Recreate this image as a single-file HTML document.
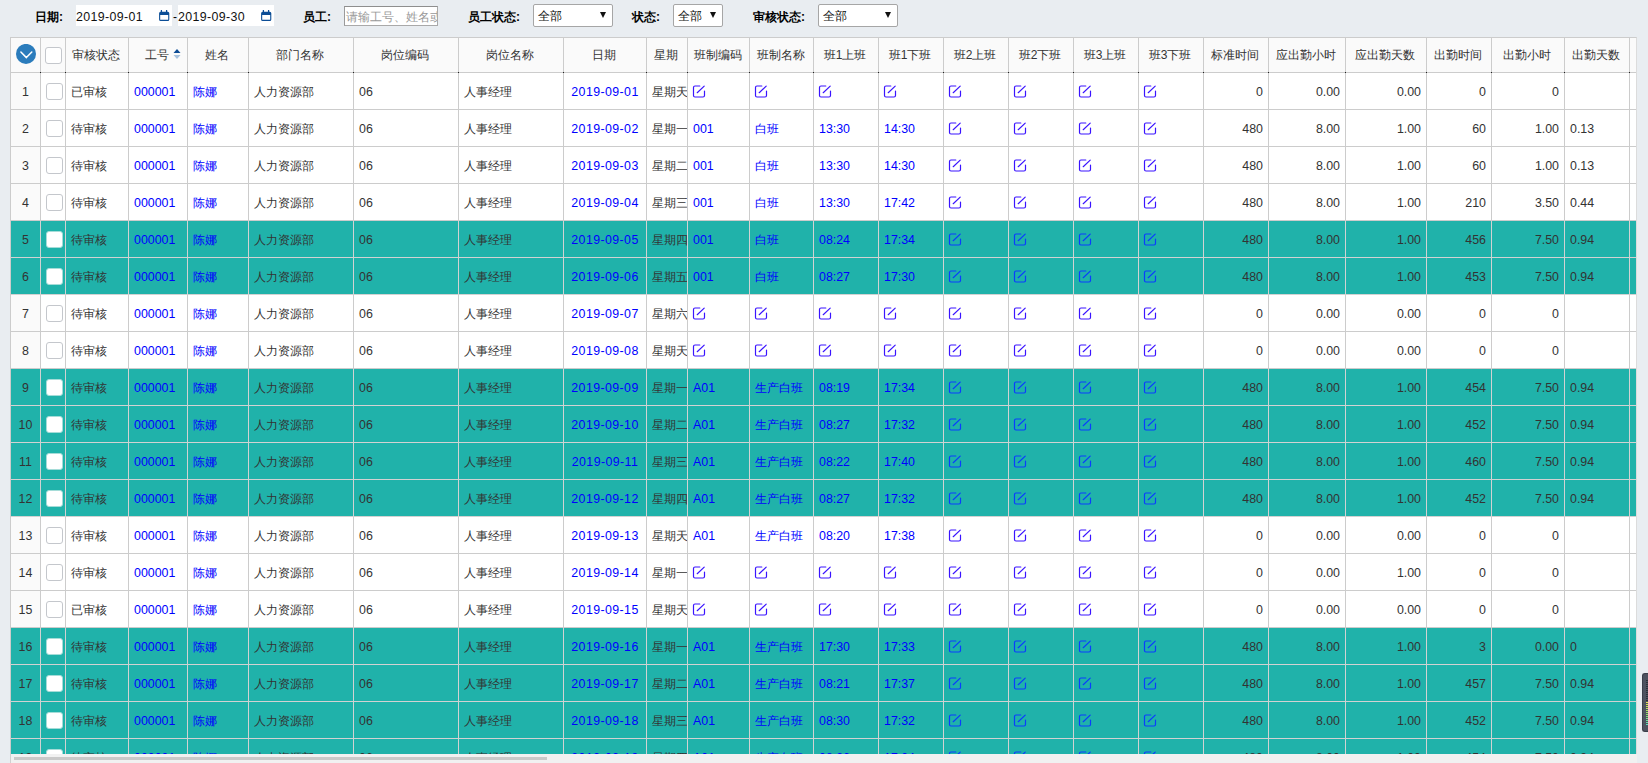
<!DOCTYPE html><html><head><meta charset="utf-8"><title>考勤</title><style>
*{box-sizing:border-box}
html,body{margin:0;padding:0}
body{width:1648px;height:763px;overflow:hidden;background:#e9edf1;font-family:"Liberation Sans",sans-serif;font-size:12px;color:#333;position:relative}
.lb{position:absolute;top:9px;height:16px;line-height:16px;font-weight:bold;color:#000;font-size:12px;white-space:nowrap}
.dt{position:absolute;top:5px;height:21px;width:96px;background:#fff;line-height:24px;padding-left:0;font-size:12.4px;letter-spacing:.35px;color:#111;white-space:nowrap}
.cal{position:absolute;top:5px;left:83px}
.inp{position:absolute;left:344px;top:6px;width:94px;height:20px;background:#fff;border:1px solid #a9a9a9;border-top-color:#8e8e8e;border-left-color:#9a9a9a;line-height:20px;padding-left:1px;color:#999;overflow:hidden;white-space:nowrap;font-size:12px}
.sel{position:absolute;top:4px;height:23px;background:#fff;border:1px solid #a6a6a6;border-radius:2px;line-height:22px;padding-left:4px;color:#111;white-space:nowrap}
.sel i{position:absolute;top:7px;width:0;height:0;border-left:3.5px solid transparent;border-right:3.5px solid transparent;border-top:6px solid #111}
#g{position:absolute;left:10px;top:37px;width:1627px;height:717px;overflow:hidden;border-left:1px solid #ccc;border-top:1px solid #ccc;border-right:1px solid #dcdcdc;background:#fff}
.r{display:flex;height:37px;width:1700px}
.r.h{height:35px}
.c{flex:none;height:100%;border-right:1px solid #ccc;border-bottom:1px solid #ccc;overflow:hidden;white-space:nowrap;line-height:38px;padding:0 5px;background:#fff;position:relative}
.h .c{background:#fafafa;line-height:34px;text-align:center;padding:0 2px 0 0}
.c.n{background:#fafafa;text-align:center;padding:0}
.t .c{background:#20b2aa;border-color:#d2d2d2}
.c.x{padding:0}
.b{color:#00f}
.ce{text-align:center;padding:0}
.ri{text-align:right}
.dd{letter-spacing:.4px}
.num{font-size:12.4px}
.cb{position:absolute;left:5px;top:10px;width:17px;height:17px;border:1px solid #c4c7cc;border-radius:3px;background:#fff}
.h .cb{left:4px;top:9px}
.t .cb{border-color:#a5dcd8}
.ed{position:absolute;left:4px;top:12px;fill:none;stroke:#3a14ff;stroke-width:1.2;stroke-linecap:round}
.t .ed{stroke:#0a3cff}
.chev{position:absolute;left:5px;top:6px}
.dot{position:absolute;width:1px;height:1px;background:#222;top:34px}
#sb{position:absolute;left:10px;top:754px;width:1627px;height:9px;background:#f1f1f1;border-left:1px solid #d0d0d0}
#sb div{position:absolute;left:3px;top:3px;width:533px;height:3px;background:#c9c9c9}
#wd{position:absolute;left:1642px;top:673px;width:8px;height:59px;background:#4d525f;border:1px solid #3b3f4a;border-right:0;border-radius:3px 0 0 3px;overflow:hidden}
#wd .a{position:absolute;left:3px;top:6px;width:4px;height:21px;background:repeating-linear-gradient(#2d3038 0 1px,#4d525f 1px 2px)}
#wd .bb{position:absolute;left:3px;top:28px;width:4px;height:24px;background:repeating-linear-gradient(transparent 0 1px,#4d525f 1px 2px),linear-gradient(#e8e44c,#86e06c 55%,#4fe0c8)}
</style></head><body>
<div class="lb" style="left:35px">日期:</div>
<div class="dt" style="left:76px">2019-09-01<svg class="cal" width="11" height="12" viewBox="0 0 11 12"><g transform="translate(0,0.3)"><path d="M2.4 0.2V2.6M7.6 0.2V2.6" stroke="#0b4d96" stroke-width="1.3" stroke-linecap="round" fill="none"/><path fill-rule="evenodd" fill="#0b4d96" d="M1.6 1.4H8.8Q10.3 1.4 10.3 2.9V9.2Q10.3 10.7 8.8 10.7H1.6Q0.1 10.7 0.1 9.2V2.9Q0.1 1.4 1.6 1.4ZM1.2 4.8V9.1Q1.2 9.5 1.6 9.5H8.8Q9.2 9.5 9.2 9.1V4.8Z"/></g></svg></div>
<div class="lb" style="left:173px;font-weight:normal;color:#000">-</div>
<div class="dt" style="left:178px">2019-09-30<svg class="cal" width="11" height="12" viewBox="0 0 11 12"><g transform="translate(0,0.3)"><path d="M2.4 0.2V2.6M7.6 0.2V2.6" stroke="#0b4d96" stroke-width="1.3" stroke-linecap="round" fill="none"/><path fill-rule="evenodd" fill="#0b4d96" d="M1.6 1.4H8.8Q10.3 1.4 10.3 2.9V9.2Q10.3 10.7 8.8 10.7H1.6Q0.1 10.7 0.1 9.2V2.9Q0.1 1.4 1.6 1.4ZM1.2 4.8V9.1Q1.2 9.5 1.6 9.5H8.8Q9.2 9.5 9.2 9.1V4.8Z"/></g></svg></div>
<div class="lb" style="left:303px">员工:</div>
<div class="inp">请输工号、姓名或</div>
<div class="lb" style="left:468px">员工状态:</div>
<div class="sel" style="left:533px;width:80px">全部<i style="left:66px"></i></div>
<div class="lb" style="left:632px">状态:</div>
<div class="sel" style="left:673px;width:50px">全部<i style="left:36px"></i></div>
<div class="lb" style="left:753px">审核状态:</div>
<div class="sel" style="left:818px;width:80px">全部<i style="left:66px"></i></div>
<div id="g">
<div class="r h">
<div class="c" style="width:30px"><svg class="chev" width="21" height="21" viewBox="0 0 21 21"><circle cx="10" cy="9.9" r="10" fill="#2b7cbc"/><path d="M4.9 8L10.4 13.6L15.8 8" fill="none" stroke="#fff" stroke-width="1.5" stroke-linecap="round" stroke-linejoin="round"/></svg></div>
<div class="c" style="width:25px"><span class="cb"></span></div>
<div class="c" style="width:63px">审核状态</div>
<div class="c" style="width:59px">工号<svg width="8" height="10" viewBox="0 0 8 10" style="position:absolute;left:44px;top:11px"><path d="M0.5 4L4 0.1L7.5 4Z" fill="#0d4b94"/><path d="M0.5 6.1L4 10L7.5 6.1Z" fill="#a6c1dd"/></svg></div>
<div class="c" style="width:61px">姓名</div>
<div class="c" style="width:105px">部门名称</div>
<div class="c" style="width:105px">岗位编码</div>
<div class="c" style="width:105px">岗位名称</div>
<div class="c" style="width:83px">日期</div>
<div class="c" style="width:41px">星期</div>
<div class="c" style="width:62px">班制编码</div>
<div class="c" style="width:64px">班制名称</div>
<div class="c" style="width:65px">班1上班</div>
<div class="c" style="width:65px">班1下班</div>
<div class="c" style="width:65px">班2上班</div>
<div class="c" style="width:65px">班2下班</div>
<div class="c" style="width:65px">班3上班</div>
<div class="c" style="width:65px">班3下班</div>
<div class="c" style="width:65px">标准时间</div>
<div class="c" style="width:77px">应出勤小时</div>
<div class="c" style="width:81px">应出勤天数</div>
<div class="c" style="width:65px">出勤时间</div>
<div class="c" style="width:73px">出勤小时</div>
<div class="c" style="width:65px">出勤天数</div>
<div class="c" style="width:20px"></div>
</div>
<div class="dot" style="left:29px"></div>
<div class="dot" style="left:54px"></div>
<div class="dot" style="left:117px"></div>
<div class="dot" style="left:176px"></div>
<div class="dot" style="left:237px"></div>
<div class="dot" style="left:342px"></div>
<div class="dot" style="left:447px"></div>
<div class="dot" style="left:552px"></div>
<div class="dot" style="left:635px"></div>
<div class="dot" style="left:676px"></div>
<div class="dot" style="left:738px"></div>
<div class="dot" style="left:802px"></div>
<div class="dot" style="left:867px"></div>
<div class="dot" style="left:932px"></div>
<div class="dot" style="left:997px"></div>
<div class="dot" style="left:1062px"></div>
<div class="dot" style="left:1127px"></div>
<div class="dot" style="left:1192px"></div>
<div class="dot" style="left:1257px"></div>
<div class="dot" style="left:1334px"></div>
<div class="dot" style="left:1415px"></div>
<div class="dot" style="left:1480px"></div>
<div class="dot" style="left:1553px"></div>
<div class="dot" style="left:1618px"></div>
<div class="r">
<div class="c n num" style="width:30px">1</div>
<div class="c x" style="width:25px"><span class="cb"></span></div>
<div class="c " style="width:63px">已审核</div>
<div class="c b num" style="width:59px">000001</div>
<div class="c b" style="width:61px">陈娜</div>
<div class="c " style="width:105px">人力资源部</div>
<div class="c num" style="width:105px">06</div>
<div class="c " style="width:105px">人事经理</div>
<div class="c b ce num dd" style="width:83px">2019-09-01</div>
<div class="c " style="width:41px">星期天</div>
<div class="c x" style="width:62px"><svg class="ed" width="14" height="14" viewBox="0 0 14 14"><path d="M7.8 1H3Q1.5 1 1.5 2.5V10.5Q1.5 12 3 12H11Q12.5 12 12.5 10.5V6M5.2 7.7L12.2 1.1"/></svg></div>
<div class="c x" style="width:64px"><svg class="ed" width="14" height="14" viewBox="0 0 14 14"><path d="M7.8 1H3Q1.5 1 1.5 2.5V10.5Q1.5 12 3 12H11Q12.5 12 12.5 10.5V6M5.2 7.7L12.2 1.1"/></svg></div>
<div class="c x" style="width:65px"><svg class="ed" width="14" height="14" viewBox="0 0 14 14"><path d="M7.8 1H3Q1.5 1 1.5 2.5V10.5Q1.5 12 3 12H11Q12.5 12 12.5 10.5V6M5.2 7.7L12.2 1.1"/></svg></div>
<div class="c x" style="width:65px"><svg class="ed" width="14" height="14" viewBox="0 0 14 14"><path d="M7.8 1H3Q1.5 1 1.5 2.5V10.5Q1.5 12 3 12H11Q12.5 12 12.5 10.5V6M5.2 7.7L12.2 1.1"/></svg></div>
<div class="c x" style="width:65px"><svg class="ed" width="14" height="14" viewBox="0 0 14 14"><path d="M7.8 1H3Q1.5 1 1.5 2.5V10.5Q1.5 12 3 12H11Q12.5 12 12.5 10.5V6M5.2 7.7L12.2 1.1"/></svg></div>
<div class="c x" style="width:65px"><svg class="ed" width="14" height="14" viewBox="0 0 14 14"><path d="M7.8 1H3Q1.5 1 1.5 2.5V10.5Q1.5 12 3 12H11Q12.5 12 12.5 10.5V6M5.2 7.7L12.2 1.1"/></svg></div>
<div class="c x" style="width:65px"><svg class="ed" width="14" height="14" viewBox="0 0 14 14"><path d="M7.8 1H3Q1.5 1 1.5 2.5V10.5Q1.5 12 3 12H11Q12.5 12 12.5 10.5V6M5.2 7.7L12.2 1.1"/></svg></div>
<div class="c x" style="width:65px"><svg class="ed" width="14" height="14" viewBox="0 0 14 14"><path d="M7.8 1H3Q1.5 1 1.5 2.5V10.5Q1.5 12 3 12H11Q12.5 12 12.5 10.5V6M5.2 7.7L12.2 1.1"/></svg></div>
<div class="c ri num" style="width:65px">0</div>
<div class="c ri num" style="width:77px">0.00</div>
<div class="c ri num" style="width:81px">0.00</div>
<div class="c ri num" style="width:65px">0</div>
<div class="c ri num" style="width:73px">0</div>
<div class="c num" style="width:65px"></div>
<div class="c " style="width:20px"></div>
</div>
<div class="r">
<div class="c n num" style="width:30px">2</div>
<div class="c x" style="width:25px"><span class="cb"></span></div>
<div class="c " style="width:63px">待审核</div>
<div class="c b num" style="width:59px">000001</div>
<div class="c b" style="width:61px">陈娜</div>
<div class="c " style="width:105px">人力资源部</div>
<div class="c num" style="width:105px">06</div>
<div class="c " style="width:105px">人事经理</div>
<div class="c b ce num dd" style="width:83px">2019-09-02</div>
<div class="c " style="width:41px">星期一</div>
<div class="c b num" style="width:62px">001</div>
<div class="c b " style="width:64px">白班</div>
<div class="c b num" style="width:65px">13:30</div>
<div class="c b num" style="width:65px">14:30</div>
<div class="c x" style="width:65px"><svg class="ed" width="14" height="14" viewBox="0 0 14 14"><path d="M7.8 1H3Q1.5 1 1.5 2.5V10.5Q1.5 12 3 12H11Q12.5 12 12.5 10.5V6M5.2 7.7L12.2 1.1"/></svg></div>
<div class="c x" style="width:65px"><svg class="ed" width="14" height="14" viewBox="0 0 14 14"><path d="M7.8 1H3Q1.5 1 1.5 2.5V10.5Q1.5 12 3 12H11Q12.5 12 12.5 10.5V6M5.2 7.7L12.2 1.1"/></svg></div>
<div class="c x" style="width:65px"><svg class="ed" width="14" height="14" viewBox="0 0 14 14"><path d="M7.8 1H3Q1.5 1 1.5 2.5V10.5Q1.5 12 3 12H11Q12.5 12 12.5 10.5V6M5.2 7.7L12.2 1.1"/></svg></div>
<div class="c x" style="width:65px"><svg class="ed" width="14" height="14" viewBox="0 0 14 14"><path d="M7.8 1H3Q1.5 1 1.5 2.5V10.5Q1.5 12 3 12H11Q12.5 12 12.5 10.5V6M5.2 7.7L12.2 1.1"/></svg></div>
<div class="c ri num" style="width:65px">480</div>
<div class="c ri num" style="width:77px">8.00</div>
<div class="c ri num" style="width:81px">1.00</div>
<div class="c ri num" style="width:65px">60</div>
<div class="c ri num" style="width:73px">1.00</div>
<div class="c num" style="width:65px">0.13</div>
<div class="c " style="width:20px"></div>
</div>
<div class="r">
<div class="c n num" style="width:30px">3</div>
<div class="c x" style="width:25px"><span class="cb"></span></div>
<div class="c " style="width:63px">待审核</div>
<div class="c b num" style="width:59px">000001</div>
<div class="c b" style="width:61px">陈娜</div>
<div class="c " style="width:105px">人力资源部</div>
<div class="c num" style="width:105px">06</div>
<div class="c " style="width:105px">人事经理</div>
<div class="c b ce num dd" style="width:83px">2019-09-03</div>
<div class="c " style="width:41px">星期二</div>
<div class="c b num" style="width:62px">001</div>
<div class="c b " style="width:64px">白班</div>
<div class="c b num" style="width:65px">13:30</div>
<div class="c b num" style="width:65px">14:30</div>
<div class="c x" style="width:65px"><svg class="ed" width="14" height="14" viewBox="0 0 14 14"><path d="M7.8 1H3Q1.5 1 1.5 2.5V10.5Q1.5 12 3 12H11Q12.5 12 12.5 10.5V6M5.2 7.7L12.2 1.1"/></svg></div>
<div class="c x" style="width:65px"><svg class="ed" width="14" height="14" viewBox="0 0 14 14"><path d="M7.8 1H3Q1.5 1 1.5 2.5V10.5Q1.5 12 3 12H11Q12.5 12 12.5 10.5V6M5.2 7.7L12.2 1.1"/></svg></div>
<div class="c x" style="width:65px"><svg class="ed" width="14" height="14" viewBox="0 0 14 14"><path d="M7.8 1H3Q1.5 1 1.5 2.5V10.5Q1.5 12 3 12H11Q12.5 12 12.5 10.5V6M5.2 7.7L12.2 1.1"/></svg></div>
<div class="c x" style="width:65px"><svg class="ed" width="14" height="14" viewBox="0 0 14 14"><path d="M7.8 1H3Q1.5 1 1.5 2.5V10.5Q1.5 12 3 12H11Q12.5 12 12.5 10.5V6M5.2 7.7L12.2 1.1"/></svg></div>
<div class="c ri num" style="width:65px">480</div>
<div class="c ri num" style="width:77px">8.00</div>
<div class="c ri num" style="width:81px">1.00</div>
<div class="c ri num" style="width:65px">60</div>
<div class="c ri num" style="width:73px">1.00</div>
<div class="c num" style="width:65px">0.13</div>
<div class="c " style="width:20px"></div>
</div>
<div class="r">
<div class="c n num" style="width:30px">4</div>
<div class="c x" style="width:25px"><span class="cb"></span></div>
<div class="c " style="width:63px">待审核</div>
<div class="c b num" style="width:59px">000001</div>
<div class="c b" style="width:61px">陈娜</div>
<div class="c " style="width:105px">人力资源部</div>
<div class="c num" style="width:105px">06</div>
<div class="c " style="width:105px">人事经理</div>
<div class="c b ce num dd" style="width:83px">2019-09-04</div>
<div class="c " style="width:41px">星期三</div>
<div class="c b num" style="width:62px">001</div>
<div class="c b " style="width:64px">白班</div>
<div class="c b num" style="width:65px">13:30</div>
<div class="c b num" style="width:65px">17:42</div>
<div class="c x" style="width:65px"><svg class="ed" width="14" height="14" viewBox="0 0 14 14"><path d="M7.8 1H3Q1.5 1 1.5 2.5V10.5Q1.5 12 3 12H11Q12.5 12 12.5 10.5V6M5.2 7.7L12.2 1.1"/></svg></div>
<div class="c x" style="width:65px"><svg class="ed" width="14" height="14" viewBox="0 0 14 14"><path d="M7.8 1H3Q1.5 1 1.5 2.5V10.5Q1.5 12 3 12H11Q12.5 12 12.5 10.5V6M5.2 7.7L12.2 1.1"/></svg></div>
<div class="c x" style="width:65px"><svg class="ed" width="14" height="14" viewBox="0 0 14 14"><path d="M7.8 1H3Q1.5 1 1.5 2.5V10.5Q1.5 12 3 12H11Q12.5 12 12.5 10.5V6M5.2 7.7L12.2 1.1"/></svg></div>
<div class="c x" style="width:65px"><svg class="ed" width="14" height="14" viewBox="0 0 14 14"><path d="M7.8 1H3Q1.5 1 1.5 2.5V10.5Q1.5 12 3 12H11Q12.5 12 12.5 10.5V6M5.2 7.7L12.2 1.1"/></svg></div>
<div class="c ri num" style="width:65px">480</div>
<div class="c ri num" style="width:77px">8.00</div>
<div class="c ri num" style="width:81px">1.00</div>
<div class="c ri num" style="width:65px">210</div>
<div class="c ri num" style="width:73px">3.50</div>
<div class="c num" style="width:65px">0.44</div>
<div class="c " style="width:20px"></div>
</div>
<div class="r t">
<div class="c n num" style="width:30px">5</div>
<div class="c x" style="width:25px"><span class="cb"></span></div>
<div class="c " style="width:63px">待审核</div>
<div class="c b num" style="width:59px">000001</div>
<div class="c b" style="width:61px">陈娜</div>
<div class="c " style="width:105px">人力资源部</div>
<div class="c num" style="width:105px">06</div>
<div class="c " style="width:105px">人事经理</div>
<div class="c b ce num dd" style="width:83px">2019-09-05</div>
<div class="c " style="width:41px">星期四</div>
<div class="c b num" style="width:62px">001</div>
<div class="c b " style="width:64px">白班</div>
<div class="c b num" style="width:65px">08:24</div>
<div class="c b num" style="width:65px">17:34</div>
<div class="c x" style="width:65px"><svg class="ed" width="14" height="14" viewBox="0 0 14 14"><path d="M7.8 1H3Q1.5 1 1.5 2.5V10.5Q1.5 12 3 12H11Q12.5 12 12.5 10.5V6M5.2 7.7L12.2 1.1"/></svg></div>
<div class="c x" style="width:65px"><svg class="ed" width="14" height="14" viewBox="0 0 14 14"><path d="M7.8 1H3Q1.5 1 1.5 2.5V10.5Q1.5 12 3 12H11Q12.5 12 12.5 10.5V6M5.2 7.7L12.2 1.1"/></svg></div>
<div class="c x" style="width:65px"><svg class="ed" width="14" height="14" viewBox="0 0 14 14"><path d="M7.8 1H3Q1.5 1 1.5 2.5V10.5Q1.5 12 3 12H11Q12.5 12 12.5 10.5V6M5.2 7.7L12.2 1.1"/></svg></div>
<div class="c x" style="width:65px"><svg class="ed" width="14" height="14" viewBox="0 0 14 14"><path d="M7.8 1H3Q1.5 1 1.5 2.5V10.5Q1.5 12 3 12H11Q12.5 12 12.5 10.5V6M5.2 7.7L12.2 1.1"/></svg></div>
<div class="c ri num" style="width:65px">480</div>
<div class="c ri num" style="width:77px">8.00</div>
<div class="c ri num" style="width:81px">1.00</div>
<div class="c ri num" style="width:65px">456</div>
<div class="c ri num" style="width:73px">7.50</div>
<div class="c num" style="width:65px">0.94</div>
<div class="c " style="width:20px"></div>
</div>
<div class="r t">
<div class="c n num" style="width:30px">6</div>
<div class="c x" style="width:25px"><span class="cb"></span></div>
<div class="c " style="width:63px">待审核</div>
<div class="c b num" style="width:59px">000001</div>
<div class="c b" style="width:61px">陈娜</div>
<div class="c " style="width:105px">人力资源部</div>
<div class="c num" style="width:105px">06</div>
<div class="c " style="width:105px">人事经理</div>
<div class="c b ce num dd" style="width:83px">2019-09-06</div>
<div class="c " style="width:41px">星期五</div>
<div class="c b num" style="width:62px">001</div>
<div class="c b " style="width:64px">白班</div>
<div class="c b num" style="width:65px">08:27</div>
<div class="c b num" style="width:65px">17:30</div>
<div class="c x" style="width:65px"><svg class="ed" width="14" height="14" viewBox="0 0 14 14"><path d="M7.8 1H3Q1.5 1 1.5 2.5V10.5Q1.5 12 3 12H11Q12.5 12 12.5 10.5V6M5.2 7.7L12.2 1.1"/></svg></div>
<div class="c x" style="width:65px"><svg class="ed" width="14" height="14" viewBox="0 0 14 14"><path d="M7.8 1H3Q1.5 1 1.5 2.5V10.5Q1.5 12 3 12H11Q12.5 12 12.5 10.5V6M5.2 7.7L12.2 1.1"/></svg></div>
<div class="c x" style="width:65px"><svg class="ed" width="14" height="14" viewBox="0 0 14 14"><path d="M7.8 1H3Q1.5 1 1.5 2.5V10.5Q1.5 12 3 12H11Q12.5 12 12.5 10.5V6M5.2 7.7L12.2 1.1"/></svg></div>
<div class="c x" style="width:65px"><svg class="ed" width="14" height="14" viewBox="0 0 14 14"><path d="M7.8 1H3Q1.5 1 1.5 2.5V10.5Q1.5 12 3 12H11Q12.5 12 12.5 10.5V6M5.2 7.7L12.2 1.1"/></svg></div>
<div class="c ri num" style="width:65px">480</div>
<div class="c ri num" style="width:77px">8.00</div>
<div class="c ri num" style="width:81px">1.00</div>
<div class="c ri num" style="width:65px">453</div>
<div class="c ri num" style="width:73px">7.50</div>
<div class="c num" style="width:65px">0.94</div>
<div class="c " style="width:20px"></div>
</div>
<div class="r">
<div class="c n num" style="width:30px">7</div>
<div class="c x" style="width:25px"><span class="cb"></span></div>
<div class="c " style="width:63px">待审核</div>
<div class="c b num" style="width:59px">000001</div>
<div class="c b" style="width:61px">陈娜</div>
<div class="c " style="width:105px">人力资源部</div>
<div class="c num" style="width:105px">06</div>
<div class="c " style="width:105px">人事经理</div>
<div class="c b ce num dd" style="width:83px">2019-09-07</div>
<div class="c " style="width:41px">星期六</div>
<div class="c x" style="width:62px"><svg class="ed" width="14" height="14" viewBox="0 0 14 14"><path d="M7.8 1H3Q1.5 1 1.5 2.5V10.5Q1.5 12 3 12H11Q12.5 12 12.5 10.5V6M5.2 7.7L12.2 1.1"/></svg></div>
<div class="c x" style="width:64px"><svg class="ed" width="14" height="14" viewBox="0 0 14 14"><path d="M7.8 1H3Q1.5 1 1.5 2.5V10.5Q1.5 12 3 12H11Q12.5 12 12.5 10.5V6M5.2 7.7L12.2 1.1"/></svg></div>
<div class="c x" style="width:65px"><svg class="ed" width="14" height="14" viewBox="0 0 14 14"><path d="M7.8 1H3Q1.5 1 1.5 2.5V10.5Q1.5 12 3 12H11Q12.5 12 12.5 10.5V6M5.2 7.7L12.2 1.1"/></svg></div>
<div class="c x" style="width:65px"><svg class="ed" width="14" height="14" viewBox="0 0 14 14"><path d="M7.8 1H3Q1.5 1 1.5 2.5V10.5Q1.5 12 3 12H11Q12.5 12 12.5 10.5V6M5.2 7.7L12.2 1.1"/></svg></div>
<div class="c x" style="width:65px"><svg class="ed" width="14" height="14" viewBox="0 0 14 14"><path d="M7.8 1H3Q1.5 1 1.5 2.5V10.5Q1.5 12 3 12H11Q12.5 12 12.5 10.5V6M5.2 7.7L12.2 1.1"/></svg></div>
<div class="c x" style="width:65px"><svg class="ed" width="14" height="14" viewBox="0 0 14 14"><path d="M7.8 1H3Q1.5 1 1.5 2.5V10.5Q1.5 12 3 12H11Q12.5 12 12.5 10.5V6M5.2 7.7L12.2 1.1"/></svg></div>
<div class="c x" style="width:65px"><svg class="ed" width="14" height="14" viewBox="0 0 14 14"><path d="M7.8 1H3Q1.5 1 1.5 2.5V10.5Q1.5 12 3 12H11Q12.5 12 12.5 10.5V6M5.2 7.7L12.2 1.1"/></svg></div>
<div class="c x" style="width:65px"><svg class="ed" width="14" height="14" viewBox="0 0 14 14"><path d="M7.8 1H3Q1.5 1 1.5 2.5V10.5Q1.5 12 3 12H11Q12.5 12 12.5 10.5V6M5.2 7.7L12.2 1.1"/></svg></div>
<div class="c ri num" style="width:65px">0</div>
<div class="c ri num" style="width:77px">0.00</div>
<div class="c ri num" style="width:81px">0.00</div>
<div class="c ri num" style="width:65px">0</div>
<div class="c ri num" style="width:73px">0</div>
<div class="c num" style="width:65px"></div>
<div class="c " style="width:20px"></div>
</div>
<div class="r">
<div class="c n num" style="width:30px">8</div>
<div class="c x" style="width:25px"><span class="cb"></span></div>
<div class="c " style="width:63px">待审核</div>
<div class="c b num" style="width:59px">000001</div>
<div class="c b" style="width:61px">陈娜</div>
<div class="c " style="width:105px">人力资源部</div>
<div class="c num" style="width:105px">06</div>
<div class="c " style="width:105px">人事经理</div>
<div class="c b ce num dd" style="width:83px">2019-09-08</div>
<div class="c " style="width:41px">星期天</div>
<div class="c x" style="width:62px"><svg class="ed" width="14" height="14" viewBox="0 0 14 14"><path d="M7.8 1H3Q1.5 1 1.5 2.5V10.5Q1.5 12 3 12H11Q12.5 12 12.5 10.5V6M5.2 7.7L12.2 1.1"/></svg></div>
<div class="c x" style="width:64px"><svg class="ed" width="14" height="14" viewBox="0 0 14 14"><path d="M7.8 1H3Q1.5 1 1.5 2.5V10.5Q1.5 12 3 12H11Q12.5 12 12.5 10.5V6M5.2 7.7L12.2 1.1"/></svg></div>
<div class="c x" style="width:65px"><svg class="ed" width="14" height="14" viewBox="0 0 14 14"><path d="M7.8 1H3Q1.5 1 1.5 2.5V10.5Q1.5 12 3 12H11Q12.5 12 12.5 10.5V6M5.2 7.7L12.2 1.1"/></svg></div>
<div class="c x" style="width:65px"><svg class="ed" width="14" height="14" viewBox="0 0 14 14"><path d="M7.8 1H3Q1.5 1 1.5 2.5V10.5Q1.5 12 3 12H11Q12.5 12 12.5 10.5V6M5.2 7.7L12.2 1.1"/></svg></div>
<div class="c x" style="width:65px"><svg class="ed" width="14" height="14" viewBox="0 0 14 14"><path d="M7.8 1H3Q1.5 1 1.5 2.5V10.5Q1.5 12 3 12H11Q12.5 12 12.5 10.5V6M5.2 7.7L12.2 1.1"/></svg></div>
<div class="c x" style="width:65px"><svg class="ed" width="14" height="14" viewBox="0 0 14 14"><path d="M7.8 1H3Q1.5 1 1.5 2.5V10.5Q1.5 12 3 12H11Q12.5 12 12.5 10.5V6M5.2 7.7L12.2 1.1"/></svg></div>
<div class="c x" style="width:65px"><svg class="ed" width="14" height="14" viewBox="0 0 14 14"><path d="M7.8 1H3Q1.5 1 1.5 2.5V10.5Q1.5 12 3 12H11Q12.5 12 12.5 10.5V6M5.2 7.7L12.2 1.1"/></svg></div>
<div class="c x" style="width:65px"><svg class="ed" width="14" height="14" viewBox="0 0 14 14"><path d="M7.8 1H3Q1.5 1 1.5 2.5V10.5Q1.5 12 3 12H11Q12.5 12 12.5 10.5V6M5.2 7.7L12.2 1.1"/></svg></div>
<div class="c ri num" style="width:65px">0</div>
<div class="c ri num" style="width:77px">0.00</div>
<div class="c ri num" style="width:81px">0.00</div>
<div class="c ri num" style="width:65px">0</div>
<div class="c ri num" style="width:73px">0</div>
<div class="c num" style="width:65px"></div>
<div class="c " style="width:20px"></div>
</div>
<div class="r t">
<div class="c n num" style="width:30px">9</div>
<div class="c x" style="width:25px"><span class="cb"></span></div>
<div class="c " style="width:63px">待审核</div>
<div class="c b num" style="width:59px">000001</div>
<div class="c b" style="width:61px">陈娜</div>
<div class="c " style="width:105px">人力资源部</div>
<div class="c num" style="width:105px">06</div>
<div class="c " style="width:105px">人事经理</div>
<div class="c b ce num dd" style="width:83px">2019-09-09</div>
<div class="c " style="width:41px">星期一</div>
<div class="c b num" style="width:62px">A01</div>
<div class="c b " style="width:64px">生产白班</div>
<div class="c b num" style="width:65px">08:19</div>
<div class="c b num" style="width:65px">17:34</div>
<div class="c x" style="width:65px"><svg class="ed" width="14" height="14" viewBox="0 0 14 14"><path d="M7.8 1H3Q1.5 1 1.5 2.5V10.5Q1.5 12 3 12H11Q12.5 12 12.5 10.5V6M5.2 7.7L12.2 1.1"/></svg></div>
<div class="c x" style="width:65px"><svg class="ed" width="14" height="14" viewBox="0 0 14 14"><path d="M7.8 1H3Q1.5 1 1.5 2.5V10.5Q1.5 12 3 12H11Q12.5 12 12.5 10.5V6M5.2 7.7L12.2 1.1"/></svg></div>
<div class="c x" style="width:65px"><svg class="ed" width="14" height="14" viewBox="0 0 14 14"><path d="M7.8 1H3Q1.5 1 1.5 2.5V10.5Q1.5 12 3 12H11Q12.5 12 12.5 10.5V6M5.2 7.7L12.2 1.1"/></svg></div>
<div class="c x" style="width:65px"><svg class="ed" width="14" height="14" viewBox="0 0 14 14"><path d="M7.8 1H3Q1.5 1 1.5 2.5V10.5Q1.5 12 3 12H11Q12.5 12 12.5 10.5V6M5.2 7.7L12.2 1.1"/></svg></div>
<div class="c ri num" style="width:65px">480</div>
<div class="c ri num" style="width:77px">8.00</div>
<div class="c ri num" style="width:81px">1.00</div>
<div class="c ri num" style="width:65px">454</div>
<div class="c ri num" style="width:73px">7.50</div>
<div class="c num" style="width:65px">0.94</div>
<div class="c " style="width:20px"></div>
</div>
<div class="r t">
<div class="c n num" style="width:30px">10</div>
<div class="c x" style="width:25px"><span class="cb"></span></div>
<div class="c " style="width:63px">待审核</div>
<div class="c b num" style="width:59px">000001</div>
<div class="c b" style="width:61px">陈娜</div>
<div class="c " style="width:105px">人力资源部</div>
<div class="c num" style="width:105px">06</div>
<div class="c " style="width:105px">人事经理</div>
<div class="c b ce num dd" style="width:83px">2019-09-10</div>
<div class="c " style="width:41px">星期二</div>
<div class="c b num" style="width:62px">A01</div>
<div class="c b " style="width:64px">生产白班</div>
<div class="c b num" style="width:65px">08:27</div>
<div class="c b num" style="width:65px">17:32</div>
<div class="c x" style="width:65px"><svg class="ed" width="14" height="14" viewBox="0 0 14 14"><path d="M7.8 1H3Q1.5 1 1.5 2.5V10.5Q1.5 12 3 12H11Q12.5 12 12.5 10.5V6M5.2 7.7L12.2 1.1"/></svg></div>
<div class="c x" style="width:65px"><svg class="ed" width="14" height="14" viewBox="0 0 14 14"><path d="M7.8 1H3Q1.5 1 1.5 2.5V10.5Q1.5 12 3 12H11Q12.5 12 12.5 10.5V6M5.2 7.7L12.2 1.1"/></svg></div>
<div class="c x" style="width:65px"><svg class="ed" width="14" height="14" viewBox="0 0 14 14"><path d="M7.8 1H3Q1.5 1 1.5 2.5V10.5Q1.5 12 3 12H11Q12.5 12 12.5 10.5V6M5.2 7.7L12.2 1.1"/></svg></div>
<div class="c x" style="width:65px"><svg class="ed" width="14" height="14" viewBox="0 0 14 14"><path d="M7.8 1H3Q1.5 1 1.5 2.5V10.5Q1.5 12 3 12H11Q12.5 12 12.5 10.5V6M5.2 7.7L12.2 1.1"/></svg></div>
<div class="c ri num" style="width:65px">480</div>
<div class="c ri num" style="width:77px">8.00</div>
<div class="c ri num" style="width:81px">1.00</div>
<div class="c ri num" style="width:65px">452</div>
<div class="c ri num" style="width:73px">7.50</div>
<div class="c num" style="width:65px">0.94</div>
<div class="c " style="width:20px"></div>
</div>
<div class="r t">
<div class="c n num" style="width:30px">11</div>
<div class="c x" style="width:25px"><span class="cb"></span></div>
<div class="c " style="width:63px">待审核</div>
<div class="c b num" style="width:59px">000001</div>
<div class="c b" style="width:61px">陈娜</div>
<div class="c " style="width:105px">人力资源部</div>
<div class="c num" style="width:105px">06</div>
<div class="c " style="width:105px">人事经理</div>
<div class="c b ce num dd" style="width:83px">2019-09-11</div>
<div class="c " style="width:41px">星期三</div>
<div class="c b num" style="width:62px">A01</div>
<div class="c b " style="width:64px">生产白班</div>
<div class="c b num" style="width:65px">08:22</div>
<div class="c b num" style="width:65px">17:40</div>
<div class="c x" style="width:65px"><svg class="ed" width="14" height="14" viewBox="0 0 14 14"><path d="M7.8 1H3Q1.5 1 1.5 2.5V10.5Q1.5 12 3 12H11Q12.5 12 12.5 10.5V6M5.2 7.7L12.2 1.1"/></svg></div>
<div class="c x" style="width:65px"><svg class="ed" width="14" height="14" viewBox="0 0 14 14"><path d="M7.8 1H3Q1.5 1 1.5 2.5V10.5Q1.5 12 3 12H11Q12.5 12 12.5 10.5V6M5.2 7.7L12.2 1.1"/></svg></div>
<div class="c x" style="width:65px"><svg class="ed" width="14" height="14" viewBox="0 0 14 14"><path d="M7.8 1H3Q1.5 1 1.5 2.5V10.5Q1.5 12 3 12H11Q12.5 12 12.5 10.5V6M5.2 7.7L12.2 1.1"/></svg></div>
<div class="c x" style="width:65px"><svg class="ed" width="14" height="14" viewBox="0 0 14 14"><path d="M7.8 1H3Q1.5 1 1.5 2.5V10.5Q1.5 12 3 12H11Q12.5 12 12.5 10.5V6M5.2 7.7L12.2 1.1"/></svg></div>
<div class="c ri num" style="width:65px">480</div>
<div class="c ri num" style="width:77px">8.00</div>
<div class="c ri num" style="width:81px">1.00</div>
<div class="c ri num" style="width:65px">460</div>
<div class="c ri num" style="width:73px">7.50</div>
<div class="c num" style="width:65px">0.94</div>
<div class="c " style="width:20px"></div>
</div>
<div class="r t">
<div class="c n num" style="width:30px">12</div>
<div class="c x" style="width:25px"><span class="cb"></span></div>
<div class="c " style="width:63px">待审核</div>
<div class="c b num" style="width:59px">000001</div>
<div class="c b" style="width:61px">陈娜</div>
<div class="c " style="width:105px">人力资源部</div>
<div class="c num" style="width:105px">06</div>
<div class="c " style="width:105px">人事经理</div>
<div class="c b ce num dd" style="width:83px">2019-09-12</div>
<div class="c " style="width:41px">星期四</div>
<div class="c b num" style="width:62px">A01</div>
<div class="c b " style="width:64px">生产白班</div>
<div class="c b num" style="width:65px">08:27</div>
<div class="c b num" style="width:65px">17:32</div>
<div class="c x" style="width:65px"><svg class="ed" width="14" height="14" viewBox="0 0 14 14"><path d="M7.8 1H3Q1.5 1 1.5 2.5V10.5Q1.5 12 3 12H11Q12.5 12 12.5 10.5V6M5.2 7.7L12.2 1.1"/></svg></div>
<div class="c x" style="width:65px"><svg class="ed" width="14" height="14" viewBox="0 0 14 14"><path d="M7.8 1H3Q1.5 1 1.5 2.5V10.5Q1.5 12 3 12H11Q12.5 12 12.5 10.5V6M5.2 7.7L12.2 1.1"/></svg></div>
<div class="c x" style="width:65px"><svg class="ed" width="14" height="14" viewBox="0 0 14 14"><path d="M7.8 1H3Q1.5 1 1.5 2.5V10.5Q1.5 12 3 12H11Q12.5 12 12.5 10.5V6M5.2 7.7L12.2 1.1"/></svg></div>
<div class="c x" style="width:65px"><svg class="ed" width="14" height="14" viewBox="0 0 14 14"><path d="M7.8 1H3Q1.5 1 1.5 2.5V10.5Q1.5 12 3 12H11Q12.5 12 12.5 10.5V6M5.2 7.7L12.2 1.1"/></svg></div>
<div class="c ri num" style="width:65px">480</div>
<div class="c ri num" style="width:77px">8.00</div>
<div class="c ri num" style="width:81px">1.00</div>
<div class="c ri num" style="width:65px">452</div>
<div class="c ri num" style="width:73px">7.50</div>
<div class="c num" style="width:65px">0.94</div>
<div class="c " style="width:20px"></div>
</div>
<div class="r">
<div class="c n num" style="width:30px">13</div>
<div class="c x" style="width:25px"><span class="cb"></span></div>
<div class="c " style="width:63px">待审核</div>
<div class="c b num" style="width:59px">000001</div>
<div class="c b" style="width:61px">陈娜</div>
<div class="c " style="width:105px">人力资源部</div>
<div class="c num" style="width:105px">06</div>
<div class="c " style="width:105px">人事经理</div>
<div class="c b ce num dd" style="width:83px">2019-09-13</div>
<div class="c " style="width:41px">星期天</div>
<div class="c b num" style="width:62px">A01</div>
<div class="c b " style="width:64px">生产白班</div>
<div class="c b num" style="width:65px">08:20</div>
<div class="c b num" style="width:65px">17:38</div>
<div class="c x" style="width:65px"><svg class="ed" width="14" height="14" viewBox="0 0 14 14"><path d="M7.8 1H3Q1.5 1 1.5 2.5V10.5Q1.5 12 3 12H11Q12.5 12 12.5 10.5V6M5.2 7.7L12.2 1.1"/></svg></div>
<div class="c x" style="width:65px"><svg class="ed" width="14" height="14" viewBox="0 0 14 14"><path d="M7.8 1H3Q1.5 1 1.5 2.5V10.5Q1.5 12 3 12H11Q12.5 12 12.5 10.5V6M5.2 7.7L12.2 1.1"/></svg></div>
<div class="c x" style="width:65px"><svg class="ed" width="14" height="14" viewBox="0 0 14 14"><path d="M7.8 1H3Q1.5 1 1.5 2.5V10.5Q1.5 12 3 12H11Q12.5 12 12.5 10.5V6M5.2 7.7L12.2 1.1"/></svg></div>
<div class="c x" style="width:65px"><svg class="ed" width="14" height="14" viewBox="0 0 14 14"><path d="M7.8 1H3Q1.5 1 1.5 2.5V10.5Q1.5 12 3 12H11Q12.5 12 12.5 10.5V6M5.2 7.7L12.2 1.1"/></svg></div>
<div class="c ri num" style="width:65px">0</div>
<div class="c ri num" style="width:77px">0.00</div>
<div class="c ri num" style="width:81px">0.00</div>
<div class="c ri num" style="width:65px">0</div>
<div class="c ri num" style="width:73px">0</div>
<div class="c num" style="width:65px"></div>
<div class="c " style="width:20px"></div>
</div>
<div class="r">
<div class="c n num" style="width:30px">14</div>
<div class="c x" style="width:25px"><span class="cb"></span></div>
<div class="c " style="width:63px">待审核</div>
<div class="c b num" style="width:59px">000001</div>
<div class="c b" style="width:61px">陈娜</div>
<div class="c " style="width:105px">人力资源部</div>
<div class="c num" style="width:105px">06</div>
<div class="c " style="width:105px">人事经理</div>
<div class="c b ce num dd" style="width:83px">2019-09-14</div>
<div class="c " style="width:41px">星期一</div>
<div class="c x" style="width:62px"><svg class="ed" width="14" height="14" viewBox="0 0 14 14"><path d="M7.8 1H3Q1.5 1 1.5 2.5V10.5Q1.5 12 3 12H11Q12.5 12 12.5 10.5V6M5.2 7.7L12.2 1.1"/></svg></div>
<div class="c x" style="width:64px"><svg class="ed" width="14" height="14" viewBox="0 0 14 14"><path d="M7.8 1H3Q1.5 1 1.5 2.5V10.5Q1.5 12 3 12H11Q12.5 12 12.5 10.5V6M5.2 7.7L12.2 1.1"/></svg></div>
<div class="c x" style="width:65px"><svg class="ed" width="14" height="14" viewBox="0 0 14 14"><path d="M7.8 1H3Q1.5 1 1.5 2.5V10.5Q1.5 12 3 12H11Q12.5 12 12.5 10.5V6M5.2 7.7L12.2 1.1"/></svg></div>
<div class="c x" style="width:65px"><svg class="ed" width="14" height="14" viewBox="0 0 14 14"><path d="M7.8 1H3Q1.5 1 1.5 2.5V10.5Q1.5 12 3 12H11Q12.5 12 12.5 10.5V6M5.2 7.7L12.2 1.1"/></svg></div>
<div class="c x" style="width:65px"><svg class="ed" width="14" height="14" viewBox="0 0 14 14"><path d="M7.8 1H3Q1.5 1 1.5 2.5V10.5Q1.5 12 3 12H11Q12.5 12 12.5 10.5V6M5.2 7.7L12.2 1.1"/></svg></div>
<div class="c x" style="width:65px"><svg class="ed" width="14" height="14" viewBox="0 0 14 14"><path d="M7.8 1H3Q1.5 1 1.5 2.5V10.5Q1.5 12 3 12H11Q12.5 12 12.5 10.5V6M5.2 7.7L12.2 1.1"/></svg></div>
<div class="c x" style="width:65px"><svg class="ed" width="14" height="14" viewBox="0 0 14 14"><path d="M7.8 1H3Q1.5 1 1.5 2.5V10.5Q1.5 12 3 12H11Q12.5 12 12.5 10.5V6M5.2 7.7L12.2 1.1"/></svg></div>
<div class="c x" style="width:65px"><svg class="ed" width="14" height="14" viewBox="0 0 14 14"><path d="M7.8 1H3Q1.5 1 1.5 2.5V10.5Q1.5 12 3 12H11Q12.5 12 12.5 10.5V6M5.2 7.7L12.2 1.1"/></svg></div>
<div class="c ri num" style="width:65px">0</div>
<div class="c ri num" style="width:77px">0.00</div>
<div class="c ri num" style="width:81px">1.00</div>
<div class="c ri num" style="width:65px">0</div>
<div class="c ri num" style="width:73px">0</div>
<div class="c num" style="width:65px"></div>
<div class="c " style="width:20px"></div>
</div>
<div class="r">
<div class="c n num" style="width:30px">15</div>
<div class="c x" style="width:25px"><span class="cb"></span></div>
<div class="c " style="width:63px">已审核</div>
<div class="c b num" style="width:59px">000001</div>
<div class="c b" style="width:61px">陈娜</div>
<div class="c " style="width:105px">人力资源部</div>
<div class="c num" style="width:105px">06</div>
<div class="c " style="width:105px">人事经理</div>
<div class="c b ce num dd" style="width:83px">2019-09-15</div>
<div class="c " style="width:41px">星期天</div>
<div class="c x" style="width:62px"><svg class="ed" width="14" height="14" viewBox="0 0 14 14"><path d="M7.8 1H3Q1.5 1 1.5 2.5V10.5Q1.5 12 3 12H11Q12.5 12 12.5 10.5V6M5.2 7.7L12.2 1.1"/></svg></div>
<div class="c x" style="width:64px"><svg class="ed" width="14" height="14" viewBox="0 0 14 14"><path d="M7.8 1H3Q1.5 1 1.5 2.5V10.5Q1.5 12 3 12H11Q12.5 12 12.5 10.5V6M5.2 7.7L12.2 1.1"/></svg></div>
<div class="c x" style="width:65px"><svg class="ed" width="14" height="14" viewBox="0 0 14 14"><path d="M7.8 1H3Q1.5 1 1.5 2.5V10.5Q1.5 12 3 12H11Q12.5 12 12.5 10.5V6M5.2 7.7L12.2 1.1"/></svg></div>
<div class="c x" style="width:65px"><svg class="ed" width="14" height="14" viewBox="0 0 14 14"><path d="M7.8 1H3Q1.5 1 1.5 2.5V10.5Q1.5 12 3 12H11Q12.5 12 12.5 10.5V6M5.2 7.7L12.2 1.1"/></svg></div>
<div class="c x" style="width:65px"><svg class="ed" width="14" height="14" viewBox="0 0 14 14"><path d="M7.8 1H3Q1.5 1 1.5 2.5V10.5Q1.5 12 3 12H11Q12.5 12 12.5 10.5V6M5.2 7.7L12.2 1.1"/></svg></div>
<div class="c x" style="width:65px"><svg class="ed" width="14" height="14" viewBox="0 0 14 14"><path d="M7.8 1H3Q1.5 1 1.5 2.5V10.5Q1.5 12 3 12H11Q12.5 12 12.5 10.5V6M5.2 7.7L12.2 1.1"/></svg></div>
<div class="c x" style="width:65px"><svg class="ed" width="14" height="14" viewBox="0 0 14 14"><path d="M7.8 1H3Q1.5 1 1.5 2.5V10.5Q1.5 12 3 12H11Q12.5 12 12.5 10.5V6M5.2 7.7L12.2 1.1"/></svg></div>
<div class="c x" style="width:65px"><svg class="ed" width="14" height="14" viewBox="0 0 14 14"><path d="M7.8 1H3Q1.5 1 1.5 2.5V10.5Q1.5 12 3 12H11Q12.5 12 12.5 10.5V6M5.2 7.7L12.2 1.1"/></svg></div>
<div class="c ri num" style="width:65px">0</div>
<div class="c ri num" style="width:77px">0.00</div>
<div class="c ri num" style="width:81px">0.00</div>
<div class="c ri num" style="width:65px">0</div>
<div class="c ri num" style="width:73px">0</div>
<div class="c num" style="width:65px"></div>
<div class="c " style="width:20px"></div>
</div>
<div class="r t">
<div class="c n num" style="width:30px">16</div>
<div class="c x" style="width:25px"><span class="cb"></span></div>
<div class="c " style="width:63px">待审核</div>
<div class="c b num" style="width:59px">000001</div>
<div class="c b" style="width:61px">陈娜</div>
<div class="c " style="width:105px">人力资源部</div>
<div class="c num" style="width:105px">06</div>
<div class="c " style="width:105px">人事经理</div>
<div class="c b ce num dd" style="width:83px">2019-09-16</div>
<div class="c " style="width:41px">星期一</div>
<div class="c b num" style="width:62px">A01</div>
<div class="c b " style="width:64px">生产白班</div>
<div class="c b num" style="width:65px">17:30</div>
<div class="c b num" style="width:65px">17:33</div>
<div class="c x" style="width:65px"><svg class="ed" width="14" height="14" viewBox="0 0 14 14"><path d="M7.8 1H3Q1.5 1 1.5 2.5V10.5Q1.5 12 3 12H11Q12.5 12 12.5 10.5V6M5.2 7.7L12.2 1.1"/></svg></div>
<div class="c x" style="width:65px"><svg class="ed" width="14" height="14" viewBox="0 0 14 14"><path d="M7.8 1H3Q1.5 1 1.5 2.5V10.5Q1.5 12 3 12H11Q12.5 12 12.5 10.5V6M5.2 7.7L12.2 1.1"/></svg></div>
<div class="c x" style="width:65px"><svg class="ed" width="14" height="14" viewBox="0 0 14 14"><path d="M7.8 1H3Q1.5 1 1.5 2.5V10.5Q1.5 12 3 12H11Q12.5 12 12.5 10.5V6M5.2 7.7L12.2 1.1"/></svg></div>
<div class="c x" style="width:65px"><svg class="ed" width="14" height="14" viewBox="0 0 14 14"><path d="M7.8 1H3Q1.5 1 1.5 2.5V10.5Q1.5 12 3 12H11Q12.5 12 12.5 10.5V6M5.2 7.7L12.2 1.1"/></svg></div>
<div class="c ri num" style="width:65px">480</div>
<div class="c ri num" style="width:77px">8.00</div>
<div class="c ri num" style="width:81px">1.00</div>
<div class="c ri num" style="width:65px">3</div>
<div class="c ri num" style="width:73px">0.00</div>
<div class="c num" style="width:65px">0</div>
<div class="c " style="width:20px"></div>
</div>
<div class="r t">
<div class="c n num" style="width:30px">17</div>
<div class="c x" style="width:25px"><span class="cb"></span></div>
<div class="c " style="width:63px">待审核</div>
<div class="c b num" style="width:59px">000001</div>
<div class="c b" style="width:61px">陈娜</div>
<div class="c " style="width:105px">人力资源部</div>
<div class="c num" style="width:105px">06</div>
<div class="c " style="width:105px">人事经理</div>
<div class="c b ce num dd" style="width:83px">2019-09-17</div>
<div class="c " style="width:41px">星期二</div>
<div class="c b num" style="width:62px">A01</div>
<div class="c b " style="width:64px">生产白班</div>
<div class="c b num" style="width:65px">08:21</div>
<div class="c b num" style="width:65px">17:37</div>
<div class="c x" style="width:65px"><svg class="ed" width="14" height="14" viewBox="0 0 14 14"><path d="M7.8 1H3Q1.5 1 1.5 2.5V10.5Q1.5 12 3 12H11Q12.5 12 12.5 10.5V6M5.2 7.7L12.2 1.1"/></svg></div>
<div class="c x" style="width:65px"><svg class="ed" width="14" height="14" viewBox="0 0 14 14"><path d="M7.8 1H3Q1.5 1 1.5 2.5V10.5Q1.5 12 3 12H11Q12.5 12 12.5 10.5V6M5.2 7.7L12.2 1.1"/></svg></div>
<div class="c x" style="width:65px"><svg class="ed" width="14" height="14" viewBox="0 0 14 14"><path d="M7.8 1H3Q1.5 1 1.5 2.5V10.5Q1.5 12 3 12H11Q12.5 12 12.5 10.5V6M5.2 7.7L12.2 1.1"/></svg></div>
<div class="c x" style="width:65px"><svg class="ed" width="14" height="14" viewBox="0 0 14 14"><path d="M7.8 1H3Q1.5 1 1.5 2.5V10.5Q1.5 12 3 12H11Q12.5 12 12.5 10.5V6M5.2 7.7L12.2 1.1"/></svg></div>
<div class="c ri num" style="width:65px">480</div>
<div class="c ri num" style="width:77px">8.00</div>
<div class="c ri num" style="width:81px">1.00</div>
<div class="c ri num" style="width:65px">457</div>
<div class="c ri num" style="width:73px">7.50</div>
<div class="c num" style="width:65px">0.94</div>
<div class="c " style="width:20px"></div>
</div>
<div class="r t">
<div class="c n num" style="width:30px">18</div>
<div class="c x" style="width:25px"><span class="cb"></span></div>
<div class="c " style="width:63px">待审核</div>
<div class="c b num" style="width:59px">000001</div>
<div class="c b" style="width:61px">陈娜</div>
<div class="c " style="width:105px">人力资源部</div>
<div class="c num" style="width:105px">06</div>
<div class="c " style="width:105px">人事经理</div>
<div class="c b ce num dd" style="width:83px">2019-09-18</div>
<div class="c " style="width:41px">星期三</div>
<div class="c b num" style="width:62px">A01</div>
<div class="c b " style="width:64px">生产白班</div>
<div class="c b num" style="width:65px">08:30</div>
<div class="c b num" style="width:65px">17:32</div>
<div class="c x" style="width:65px"><svg class="ed" width="14" height="14" viewBox="0 0 14 14"><path d="M7.8 1H3Q1.5 1 1.5 2.5V10.5Q1.5 12 3 12H11Q12.5 12 12.5 10.5V6M5.2 7.7L12.2 1.1"/></svg></div>
<div class="c x" style="width:65px"><svg class="ed" width="14" height="14" viewBox="0 0 14 14"><path d="M7.8 1H3Q1.5 1 1.5 2.5V10.5Q1.5 12 3 12H11Q12.5 12 12.5 10.5V6M5.2 7.7L12.2 1.1"/></svg></div>
<div class="c x" style="width:65px"><svg class="ed" width="14" height="14" viewBox="0 0 14 14"><path d="M7.8 1H3Q1.5 1 1.5 2.5V10.5Q1.5 12 3 12H11Q12.5 12 12.5 10.5V6M5.2 7.7L12.2 1.1"/></svg></div>
<div class="c x" style="width:65px"><svg class="ed" width="14" height="14" viewBox="0 0 14 14"><path d="M7.8 1H3Q1.5 1 1.5 2.5V10.5Q1.5 12 3 12H11Q12.5 12 12.5 10.5V6M5.2 7.7L12.2 1.1"/></svg></div>
<div class="c ri num" style="width:65px">480</div>
<div class="c ri num" style="width:77px">8.00</div>
<div class="c ri num" style="width:81px">1.00</div>
<div class="c ri num" style="width:65px">452</div>
<div class="c ri num" style="width:73px">7.50</div>
<div class="c num" style="width:65px">0.94</div>
<div class="c " style="width:20px"></div>
</div>
<div class="r t">
<div class="c n num" style="width:30px">19</div>
<div class="c x" style="width:25px"><span class="cb"></span></div>
<div class="c " style="width:63px">待审核</div>
<div class="c b num" style="width:59px">000001</div>
<div class="c b" style="width:61px">陈娜</div>
<div class="c " style="width:105px">人力资源部</div>
<div class="c num" style="width:105px">06</div>
<div class="c " style="width:105px">人事经理</div>
<div class="c b ce num dd" style="width:83px">2019-09-19</div>
<div class="c " style="width:41px">星期四</div>
<div class="c b num" style="width:62px">A01</div>
<div class="c b " style="width:64px">生产白班</div>
<div class="c b num" style="width:65px">08:26</div>
<div class="c b num" style="width:65px">17:34</div>
<div class="c x" style="width:65px"><svg class="ed" width="14" height="14" viewBox="0 0 14 14"><path d="M7.8 1H3Q1.5 1 1.5 2.5V10.5Q1.5 12 3 12H11Q12.5 12 12.5 10.5V6M5.2 7.7L12.2 1.1"/></svg></div>
<div class="c x" style="width:65px"><svg class="ed" width="14" height="14" viewBox="0 0 14 14"><path d="M7.8 1H3Q1.5 1 1.5 2.5V10.5Q1.5 12 3 12H11Q12.5 12 12.5 10.5V6M5.2 7.7L12.2 1.1"/></svg></div>
<div class="c x" style="width:65px"><svg class="ed" width="14" height="14" viewBox="0 0 14 14"><path d="M7.8 1H3Q1.5 1 1.5 2.5V10.5Q1.5 12 3 12H11Q12.5 12 12.5 10.5V6M5.2 7.7L12.2 1.1"/></svg></div>
<div class="c x" style="width:65px"><svg class="ed" width="14" height="14" viewBox="0 0 14 14"><path d="M7.8 1H3Q1.5 1 1.5 2.5V10.5Q1.5 12 3 12H11Q12.5 12 12.5 10.5V6M5.2 7.7L12.2 1.1"/></svg></div>
<div class="c ri num" style="width:65px">480</div>
<div class="c ri num" style="width:77px">8.00</div>
<div class="c ri num" style="width:81px">1.00</div>
<div class="c ri num" style="width:65px">454</div>
<div class="c ri num" style="width:73px">7.50</div>
<div class="c num" style="width:65px">0.94</div>
<div class="c " style="width:20px"></div>
</div>
</div>
<div id="sb"><div></div></div>
<div id="wd"><div class="a"></div><div class="bb"></div></div>
</body></html>
